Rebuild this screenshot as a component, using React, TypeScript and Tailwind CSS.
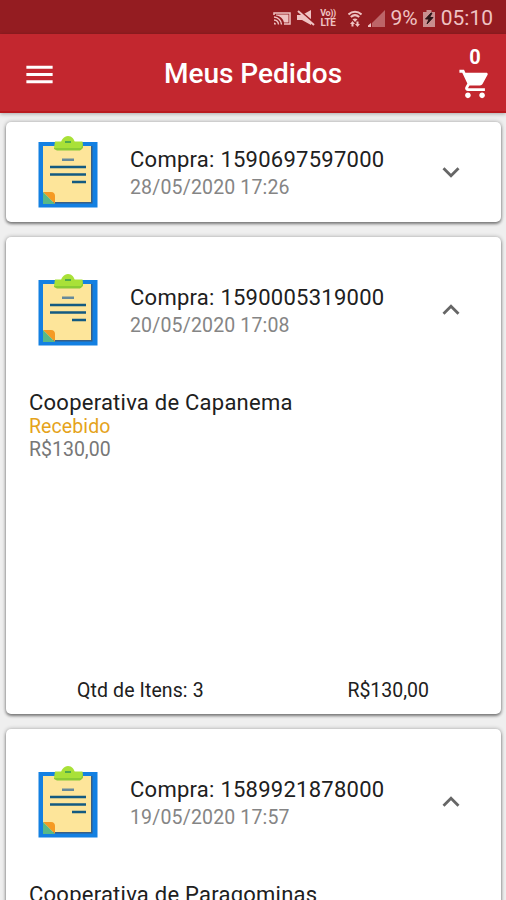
import type { ReactNode } from "react";

type Order = {
  id: string;
  date: string;
  open: boolean;
  store?: string;
  status?: string;
  total?: string;
  items?: number;
};

const orders: Order[] = [
  { id: "1590697597000", date: "28/05/2020 17:26", open: false },
  {
    id: "1590005319000",
    date: "20/05/2020 17:08",
    open: true,
    store: "Cooperativa de Capanema",
    status: "Recebido",
    total: "R$130,00",
    items: 3,
  },
  {
    id: "1589921878000",
    date: "19/05/2020 17:57",
    open: true,
    store: "Cooperativa de Paragominas",
  },
];

export default function App() {
  return (
    <div className="flex h-[900px] w-[506px] flex-col overflow-hidden bg-[#efefef] font-['Roboto',sans-serif] text-[#202020]">
      <StatusBar />
      <AppBar />
      <main className="flex min-h-0 flex-1 flex-col gap-[15px] overflow-hidden pt-[9px] pr-[5px] pl-[6px]">
        {orders.map((order) => (
          <OrderCard key={order.id} order={order} />
        ))}
      </main>
    </div>
  );
}

function StatusBar() {
  return (
    <div className="flex h-[34px] shrink-0 items-center justify-end bg-[#941c21] pt-[2px] pr-[13px] text-[#efc3c3]">
      <svg className="mr-[6px] h-[13px] w-[18px]" viewBox="0 0 18 13" fill="none">
        <path d="M1 3V1h16v11h-6" stroke="currentColor" strokeWidth="1.500" />
        <path d="M3 3.500V2.500h12.500v8H11C10 6.500 7.500 4 3 3.500Z" fill="currentColor" />
        <path d="M1 5c4 .2 7.300 3.300 7.500 7.500M1 8c2.500.1 4.300 2 4.500 4.500" stroke="currentColor" strokeWidth="1.400" />
        <path d="M1 10.500v2h2c0-1.200-.8-2-2-2Z" fill="currentColor" />
      </svg>
      <svg className="mr-[5px] h-[16px] w-[18px]" viewBox="0 0 18 16" fill="none">
        <path d="M0 5h5l9-5v15l-9-5H0V5Z" fill="currentColor" />
        <path d="m3 1 14 12" stroke="#941c21" strokeWidth="2" />
        <path d="m1 1 16 14" stroke="currentColor" strokeWidth="2" />
      </svg>
      <div className="mr-[11px] flex w-[17px] flex-col items-center text-[10px] leading-[9px] font-bold">
        <span className="text-[9px] tracking-[-0.4px]">Vo))</span>
        <span className="tracking-[-0.3px]">LTE</span>
      </div>
      <svg className="mr-[6px] h-[17px] w-[14px]" viewBox="0 0 14 17" fill="none">
        <path d="M.5 4.500c3.800-3.600 9.200-3.600 13 0M2.800 7c2.500-2.200 5.900-2.200 8.400 0" stroke="currentColor" strokeWidth="2" />
        <path d="M4.500 9.300c1.500-1.200 3.500-1.200 5 0L7 12 4.500 9.300Z" fill="currentColor" />
        <path d="M2 14 4.500 11 7 14H5.500v2.500h-2V14H2ZM7 14h1.500v-2.500h2V14H12l-2.500 3L7 14Z" fill="currentColor" />
      </svg>
      <svg className="mr-[6px] h-[17px] w-[17px]" viewBox="0 0 17 17">
        <path d="M17 0v17H4V13L17 0Z" fill="#bd6568" />
        <path d="M0 17v-1.500L3 13v4H0Z" fill="currentColor" />
      </svg>
      <span className="text-[21px] leading-none">9%</span>
      <svg className="mr-[6px] ml-[5px] h-[17px] w-[12px]" viewBox="0 0 12 17">
        <path d="M3.500 0h5v2H12v15H0V2h3.500V0Z" fill="#c98f8f" />
        <path d="M8 3 2.500 9H6l-2 5 6-6.500H6.500L9 3H8Z" fill="#2b1517" stroke="#2b1517" />
      </svg>
      <span className="text-[21px] leading-none">05:10</span>
    </div>
  );
}

function AppBar() {
  return (
    <header className="z-10 grid h-[79px] shrink-0 grid-cols-[80px_1fr_80px] items-center border-b-2 border-[#b9191e] bg-[#c3272f] pt-[3px] text-white shadow-[0_1px_4px_rgba(0,0,0,0.3)]">
      <button className="pl-[22px]" aria-label="Menu">
        <Icon className="h-[35px] w-[35px]">
          <path d="M3 18h18v-2H3v2zm0-5h18v-2H3v2zm0-7v2h18V6H3z" />
        </Icon>
      </button>
      <h1 className="text-center text-[28px] leading-8 font-medium">Meus Pedidos</h1>
      <button className="flex flex-col items-center pl-[18px]" aria-label="Carrinho">
        <span className="text-[20px] leading-[20px] font-bold">0</span>
        <Icon className="h-[34px] w-[34px]">
          <path d="M7 18c-1.100 0-1.990.9-1.990 2S5.900 22 7 22s2-.9 2-2-.9-2-2-2zM1 2v2h2l3.600 7.590-1.350 2.450c-.16.28-.25.61-.25.960 0 1.100.9 2 2 2h12v-2H7.420c-.14 0-.25-.11-.25-.25l.03-.12.9-1.630h7.450c.75 0 1.410-.41 1.750-1.030l3.580-6.490c.08-.14.12-.31.12-.48 0-.55-.45-1-1-1H5.210l-.94-2H1zm16 16c-1.100 0-1.990.9-1.990 2s.89 2 1.990 2 2-.9 2-2-.9-2-2-2z" />
        </Icon>
      </button>
    </header>
  );
}

function OrderCard({ order }: { order: Order }) {
  return (
    <section
      className={`shrink-0 rounded-[5px] bg-white shadow-[0_2px_3px_rgba(0,0,0,0.42),0_0_4px_rgba(0,0,0,0.3)] ${
        order.open ? "h-[477px] pt-[23px]" : "h-[100px]"
      }`}
    >
      <div className="flex h-[100px] items-center pr-[33px] pl-[32px]">
        <Clipboard />
        <div className="ml-[32px] flex-1 pt-[3px]">
          <h2 className="text-[22px] leading-[29px] tracking-[0.26px]">Compra: {order.id}</h2>
          <p className="text-[19.500px] leading-[28px] tracking-[0.16px] text-[#858585]">{order.date}</p>
        </div>
        <Icon className="h-[34px] w-[34px] text-[#666]">
          {order.open ? (
            <path d="M12 8l-6 6 1.410 1.410L12 10.830l4.590 4.580L18 14z" />
          ) : (
            <path d="M16.590 8.590L12 13.170 7.410 8.590 6 10l6 6 6-6z" />
          )}
        </Icon>
      </div>
      {order.open && (
        <>
          <div className="h-[312px] pt-[29px] pl-[23px]">
            <h3 className="text-[22px] leading-[27px] tracking-[0.24px]">{order.store}</h3>
            {order.status && (
              <p className="text-[19.500px] leading-[22px] tracking-[0.1px] text-[#e5a31b]">{order.status}</p>
            )}
            {order.total && <p className="text-[19.500px] leading-[23px] text-[#777]">{order.total}</p>}
          </div>
          {order.items && (
            <div className="flex justify-between pr-[72px] pl-[71px] text-[19.500px] leading-[38px]">
              <span className="tracking-[0.1px]">Qtd de Itens: {order.items}</span>
              <span>{order.total}</span>
            </div>
          )}
        </>
      )}
    </section>
  );
}

function Clipboard() {
  return (
    <svg className="h-[72px] w-[60px] shrink-0" viewBox="0 0 60 72">
      <path d="M0.500 6h59v65.500H.5z" fill="#1380e2" />
      <path d="M5 10h49v57H5z" fill="#fde59a" />
      <path d="M53 10h1.500v57.500H5V66h48z" fill="#365f87" />
      <path d="M17 5.500h27.500l.5 4-2 4.500H19l-3-2Z" fill="#a9e138" />
      <path d="M23 7c0-3 3-7 7-7s6 3 7 7Z" fill="#a9e138" />
      <path d="M16 12h27l2-4v4l-3 2.500H19l-3-1.500z" fill="#8acb35" />
      <path d="M27 5h6v2h-6z" fill="#4faa4c" />
      <path d="M24 22.500h12V25H24z" fill="#66899a" />
      <path d="M12 31h36M12 38.500h36M34 46h14" stroke="#135a81" strokeWidth="2.400" />
      <path d="M5 56h8c3 0 4 2 4 4v8L5 56Z" fill="#f59a23" />
      <path d="M5 56v12h12L5 56Z" fill="#58b987" />
    </svg>
  );
}

function Icon({ className, children }: { className: string; children: ReactNode }) {
  return (
    <svg className={className} viewBox="0 0 24 24" fill="currentColor">
      {children}
    </svg>
  );
}
